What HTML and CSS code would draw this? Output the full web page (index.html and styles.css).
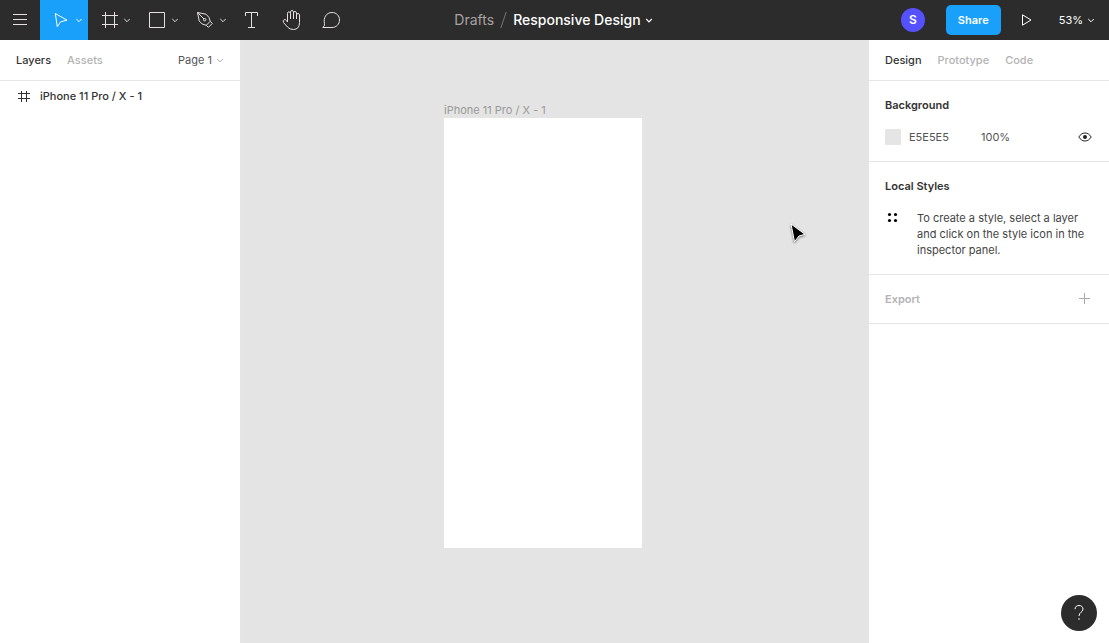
FILE: index.html
```html
<!DOCTYPE html>
<html lang="en">
<head>
<meta charset="utf-8">
<meta name="viewport" content="width=device-width, initial-scale=1">
<title>Responsive Design</title>
<link rel="stylesheet" href="styles.css">
</head>
<body>
<div class="app">
  <header class="toolbar">
    <div class="tools">
      <button class="tool" aria-label="Menu"><svg width="40" height="40"><path d="M13 14.5h14M13 19.5h14M13 24.5h14"/></svg></button>
      <button class="tool tool-active" aria-label="Move"><svg width="48" height="40"><path d="M15.3 13.5L27 20.2L20.6 21.8L17.3 26.8Z"/><path class="chevron" d="M36.3 19l2.7 2.7l2.7-2.7"/></svg></button>
      <button class="tool" aria-label="Frame"><svg width="48" height="40"><path d="M17.5 12v16M26.5 12v16M14 15.5h16M14 24.5h16"/><path class="chevron" d="M36.3 19l2.7 2.7l2.7-2.7"/></svg></button>
      <button class="tool" aria-label="Rectangle"><svg width="48" height="40"><path d="M13.5 12.5h15v15h-15z"/><path class="chevron" d="M36.3 19l2.7 2.7l2.7-2.7"/></svg></button>
      <button class="tool" aria-label="Pen"><svg width="48" height="40"><path d="M13.5 12.5L22 14.2Q25.8 17 26.2 21.3L22.3 25.3Q17.5 24.8 15.2 21ZM13.5 12.5L20 19M26.2 21.3L28.3 23.4L24.4 27.4L22.3 25.3"/><circle cx="20.7" cy="19.7" r="1.2"/><path class="chevron" d="M36.3 19l2.7 2.7l2.7-2.7"/></svg></button>
      <button class="tool" aria-label="Text"><svg width="40" height="40"><path d="M13.5 16v-3.5h12V16M19.5 12.5v15M16 27.5h7"/></svg></button>
      <button class="tool" aria-label="Hand"><svg width="40" height="40"><path d="M15.500 21V13.200Q15.700 11.800 16.800 11.800T18.500 13.200V19M18.500 13V11.800Q18.800 10.500 20 10.500T21.500 11.800V19M21.500 12.700Q21.800 11.500 23 11.500T24.500 12.800V19M24.500 14.800Q25 13.500 26.100 13.500T27.500 14.800V22.500Q27.500 29.500 21.300 29.500Q17.600 29.500 15.500 27L11.500 22.500Q10.500 20.500 12 19.800T14.300 20.400L15.500 22V19"/></svg></button>
      <button class="tool" aria-label="Comment"><svg width="40" height="40"><path d="M10.8 27.5Q12.9 25.8 12.5 23.8C11.1 17.8 14.3 12.5 20 12.5C24.5 12.5 27.5 15.8 27.5 20S24.2 27.5 20 27.5Z"/></svg></button>
    </div>
    <div class="title">
      <a class="folder" href="#">Drafts</a>
      <svg width="7" height="18"><path class="slash" d="M.8 17L6.2 1"/></svg>
      <button class="file">Responsive Design <svg width="8" height="8"><path class="chevron" d="M1.2 3l2.8 2.8l2.8-2.8"/></svg></button>
    </div>
    <div class="actions">
      <span class="avatar">S</span>
      <button class="share">Share</button>
      <button class="play" aria-label="Present"><svg width="12" height="14"><path d="M1.5 1.8L10 7L1.5 12.2Z"/></svg></button>
      <button class="zoom">53% <svg width="8" height="8"><path class="chevron" d="M1.2 3l2.8 2.8l2.8-2.8"/></svg></button>
    </div>
  </header>
  <div class="workspace">
    <aside class="panel layers">
      <nav class="tabs">
        <button class="tab tab-active">Layers</button>
        <button class="tab">Assets</button>
        <button class="page">Page 1 <svg width="8" height="8"><path class="chevron" d="M1.2 3l2.8 2.8l2.8-2.8"/></svg></button>
      </nav>
      <button class="layer"><svg width="12" height="12"><path d="M3.5 1v11M8.5 1v11M0 3.5h12M0 8.5h12"/></svg>iPhone 11 Pro / X - 1</button>
    </aside>
    <main class="canvas">
      <div class="artboard"><span class="artboard-name">iPhone 11 Pro / X - 1</span><div class="artboard-body"></div></div>
      <svg class="cursor" width="22" height="26" viewBox="0 0 22 26"><path d="M3 3L17 13.3L11 15L6.5 20.8Z"/></svg>
    </main>
    <aside class="panel inspector">
      <nav class="tabs">
        <button class="tab tab-active">Design</button>
        <button class="tab">Prototype</button>
        <button class="tab">Code</button>
      </nav>
      <section class="section">
        <h2 class="heading">Background</h2>
        <div class="fill">
          <span class="swatch"></span>
          <input class="hex" aria-label="Background color" value="E5E5E5">
          <input class="opacity" aria-label="Opacity" value="100%">
          <button class="icon-button" aria-label="Toggle visibility"><svg width="14" height="10"><path d="M.8 5C2.5 2.3 4.5 1 7 1s4.500 1.300 6.200 4C11.500 7.700 9.500 9 7 9S2.500 7.700.8 5Z"/><circle class="pupil" cx="7" cy="5" r="2"/></svg></button>
        </div>
      </section>
      <section class="section">
        <h2 class="heading">Local Styles</h2>
        <div class="hint">
          <svg width="16" height="16"><circle cx="4.500" cy="4.500" r="1.600"/><circle cx="10.500" cy="4.500" r="1.600"/><circle cx="4.500" cy="10.500" r="1.600"/><circle cx="10.500" cy="10.500" r="1.600"/></svg>
          <p class="hint-text">To create a style, select a layer and click on the style icon in the inspector panel.</p>
        </div>
      </section>
      <section class="section export">
        <h2 class="heading">Export</h2>
        <button class="icon-button" aria-label="Add export"><svg width="12" height="12"><path d="M5.500 0v11M0 5.500h11"/></svg></button>
      </section>
    </aside>
  </div>
  <button class="help" aria-label="Help"><svg width="12" height="18"><path d="M2 5.200C2 2.800 3.700 1.500 6 1.500s4 1.400 4 3.600C10 8.200 6 8.200 6 12"/><circle class="dot" cx="6" cy="15" r=".8"/></svg></button>
</div>
</body>
</html>
```
FILE: styles.css
```css
* { box-sizing: border-box; }

body {
  margin: 0;
  font: 11px/16px Inter, "Liberation Sans", sans-serif;
  color: #333;
}

button, input {
  margin: 0;
  padding: 0;
  border: 0;
  background: none;
  font: inherit;
  color: inherit;
}

svg {
  display: block;
  flex: none;
  fill: none;
  stroke: currentColor;
}

.app {
  display: flex;
  flex-direction: column;
  height: 100vh;
}

.toolbar {
  display: grid;
  grid-template-columns: 1fr auto 1fr;
  align-items: center;
  height: 40px;
  flex: none;
  padding-right: 2px;
  background: #2c2c2c;
  color: #fff;
}

.tools, .title, .actions, .file, .zoom, .page {
  display: flex;
  align-items: center;
}

.tool { color: #e6e0e0; }
.tool-active { background: #18a0fb; color: #fff; }

.title { gap: 6px; font-size: 14px; line-height: 20px; }
.folder { color: #a8a2a2; text-decoration: none; }
.slash { stroke: #777; }
.file { gap: 4px; font-weight: 500; }
.file .chevron { stroke-width: 1.2; }

.actions { justify-content: flex-end; padding-right: 12px; }

.avatar {
  width: 24px;
  height: 24px;
  border-radius: 50%;
  background: #5551ff;
  font-size: 12px;
  font-weight: 600;
  line-height: 24px;
  text-align: center;
}

.share {
  height: 30px;
  margin: 0 20px 0 21px;
  padding: 0 12px;
  border-radius: 5px;
  background: #18a0fb;
  font-size: 11px;
  font-weight: 600;
}

.play { margin-right: 26px; }
.zoom { gap: 4px; }

.workspace {
  display: flex;
  flex: 1;
  min-height: 0;
}

.panel { flex: none; background: #fff; }
.layers { width: 241px; border-right: 1px solid #e5e5e5; }
.inspector { width: 241px; border-left: 1px solid #e5e5e5; }

.tabs {
  display: flex;
  align-items: center;
  gap: 16px;
  height: 41px;
  padding: 0 16px;
  border-bottom: 1px solid #e5e5e5;
}

.tab { color: #b3b3b3; font-weight: 500; }
.tab-active { color: #333; }
.page { gap: 4px; margin-left: auto; color: #555; }
.page svg { color: #aaa; }

.layer {
  display: flex;
  align-items: center;
  gap: 10px;
  width: 100%;
  height: 30px;
  padding: 0 18px;
  font-weight: 500;
}

.canvas {
  position: relative;
  flex: 1;
  overflow: hidden;
  background: #e4e4e4;
}

.artboard {
  position: absolute;
  left: 203px;
  top: 62px;
  width: 198px;
}

.artboard-name { display: block; color: #999; }

.artboard-body {
  height: 430px;
  background: #fff;
}

.cursor {
  position: absolute;
  left: 547px;
  top: 181px;
  fill: #000;
  stroke: #fff;
  filter: drop-shadow(0 1px 1px rgba(0, 0, 0, .5));
}

.section {
  padding: 16px;
  border-bottom: 1px solid #e5e5e5;
}

.heading { margin: 0; font-size: 11px; font-weight: 600; }

.fill { display: flex; align-items: center; margin-top: 16px; color: #555; }
.swatch { width: 16px; height: 16px; border-radius: 1px; background: #e5e5e5; }
.hex { width: 64px; margin: 0 0 0 8px; }
.opacity { width: 64px; margin-left: 8px; }
.icon-button { margin-left: auto; margin-right: 1px; color: #222; }
.pupil { fill: currentColor; stroke: none; }

.hint { display: flex; gap: 16px; margin-top: 16px; }
.hint svg { fill: #000; stroke: none; }
.hint-text { margin: 0; color: #444; }

.export {
  display: flex;
  align-items: center;
  color: #b3b3b3;
}

.export .icon-button { color: #aaa; margin-right: 2px; }

.help {
  position: fixed;
  right: 12px;
  bottom: 12px;
  display: grid;
  place-items: center;
  width: 36px;
  height: 36px;
  border-radius: 50%;
  background: #2c2c2c;
  color: #fff;
}

.dot { fill: currentColor; stroke: none; }
```
